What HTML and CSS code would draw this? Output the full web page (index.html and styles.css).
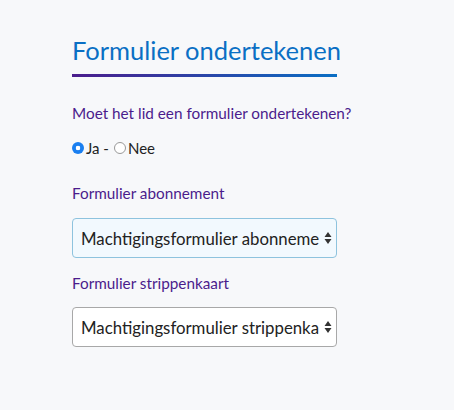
FILE: index.html
```html
<!DOCTYPE html>
<html lang="nl">
<head>
<meta charset="utf-8">
<link rel="stylesheet" href="styles.css">
</head>
<body>
<main class="panel">
  <h1 class="title">Formulier ondertekenen</h1>
  <p class="question">Moet het lid een formulier ondertekenen?</p>
  <div class="radios">
    <label class="radio"><span class="dot checked"></span>Ja -</label>
    <label class="radio"><span class="dot"></span>Nee</label>
  </div>
  <label class="field-label first">Formulier abonnement</label>
  <div class="select-wrap focused">
    <div class="select-text">Machtigingsformulier abonnement</div>
    <svg class="arrows" width="8" height="14" viewBox="0 0 8 14"><path d="M4 1 L7.5 6 H0.5 Z M4 13 L7.5 8 H0.5 Z" fill="#333"/></svg>
  </div>
  <label class="field-label">Formulier strippenkaart</label>
  <div class="select-wrap">
    <div class="select-text">Machtigingsformulier strippenkaart</div>
    <svg class="arrows" width="8" height="14" viewBox="0 0 8 14"><path d="M4 1 L7.5 6 H0.5 Z M4 13 L7.5 8 H0.5 Z" fill="#333"/></svg>
  </div>
</main>
</body>
</html>
```
FILE: styles.css
```css
html, body {
  margin: 0;
  background: #f7f8fa;
}
body {
  font-family: Lato, "Noto Sans", sans-serif;
}
.panel {
  width: 265px;
  padding: 33px 0 0 72px;
}
.title {
  margin: 0;
  font-size: 25.5px;
  font-weight: 400;
  line-height: 34px;
  color: #0a6fc4;
  white-space: nowrap;
  padding-bottom: 7px;
  border-bottom: 3px solid transparent;
  border-image: linear-gradient(90deg, #4b1c8c, #0a6fc4) 1;
}
.question {
  margin: 26px 0 0;
  font-size: 15.3px;
  line-height: 20px;
  color: #4b1c8c;
  white-space: nowrap;
}
.radios {
  display: flex;
  align-items: center;
  gap: 5px;
  margin-top: 16px;
  font-size: 15px;
  color: #222;
  line-height: 18px;
}
.radio {
  display: flex;
  align-items: center;
}
.dot {
  width: 12px;
  height: 12px;
  border-radius: 50%;
  border: 1px solid #999;
  box-sizing: border-box;
  background: #fff;
  margin: 0 2px 0 0;
}
.dot.checked {
  border: none;
  background: radial-gradient(circle, #fff 0 2px, #1a7ff0 2.6px);
}
.field-label {
  display: block;
  margin-top: 15px;
  font-size: 15.3px;
  line-height: 20px;
  color: #4b1c8c;
}
.field-label.first {
  margin-top: 26px;
}
.select-wrap {
  position: relative;
  margin-top: 15px;
  height: 40px;
  box-sizing: border-box;
  border: 1px solid #a8a8a8;
  border-radius: 4px;
  background: #fff;
  display: flex;
  align-items: center;
  padding: 0 17px 0 8px;
}
.select-wrap + .field-label + .select-wrap {
  margin-top: 14px;
}
.select-wrap.focused {
  border-color: #8ec3de;
  background: #f2f9fe;
}
.select-text {
  font-size: 16.8px;
  color: #222;
  white-space: nowrap;
  overflow: hidden;
}
.arrows {
  position: absolute;
  right: 4px;
  top: 12px;
}
```
